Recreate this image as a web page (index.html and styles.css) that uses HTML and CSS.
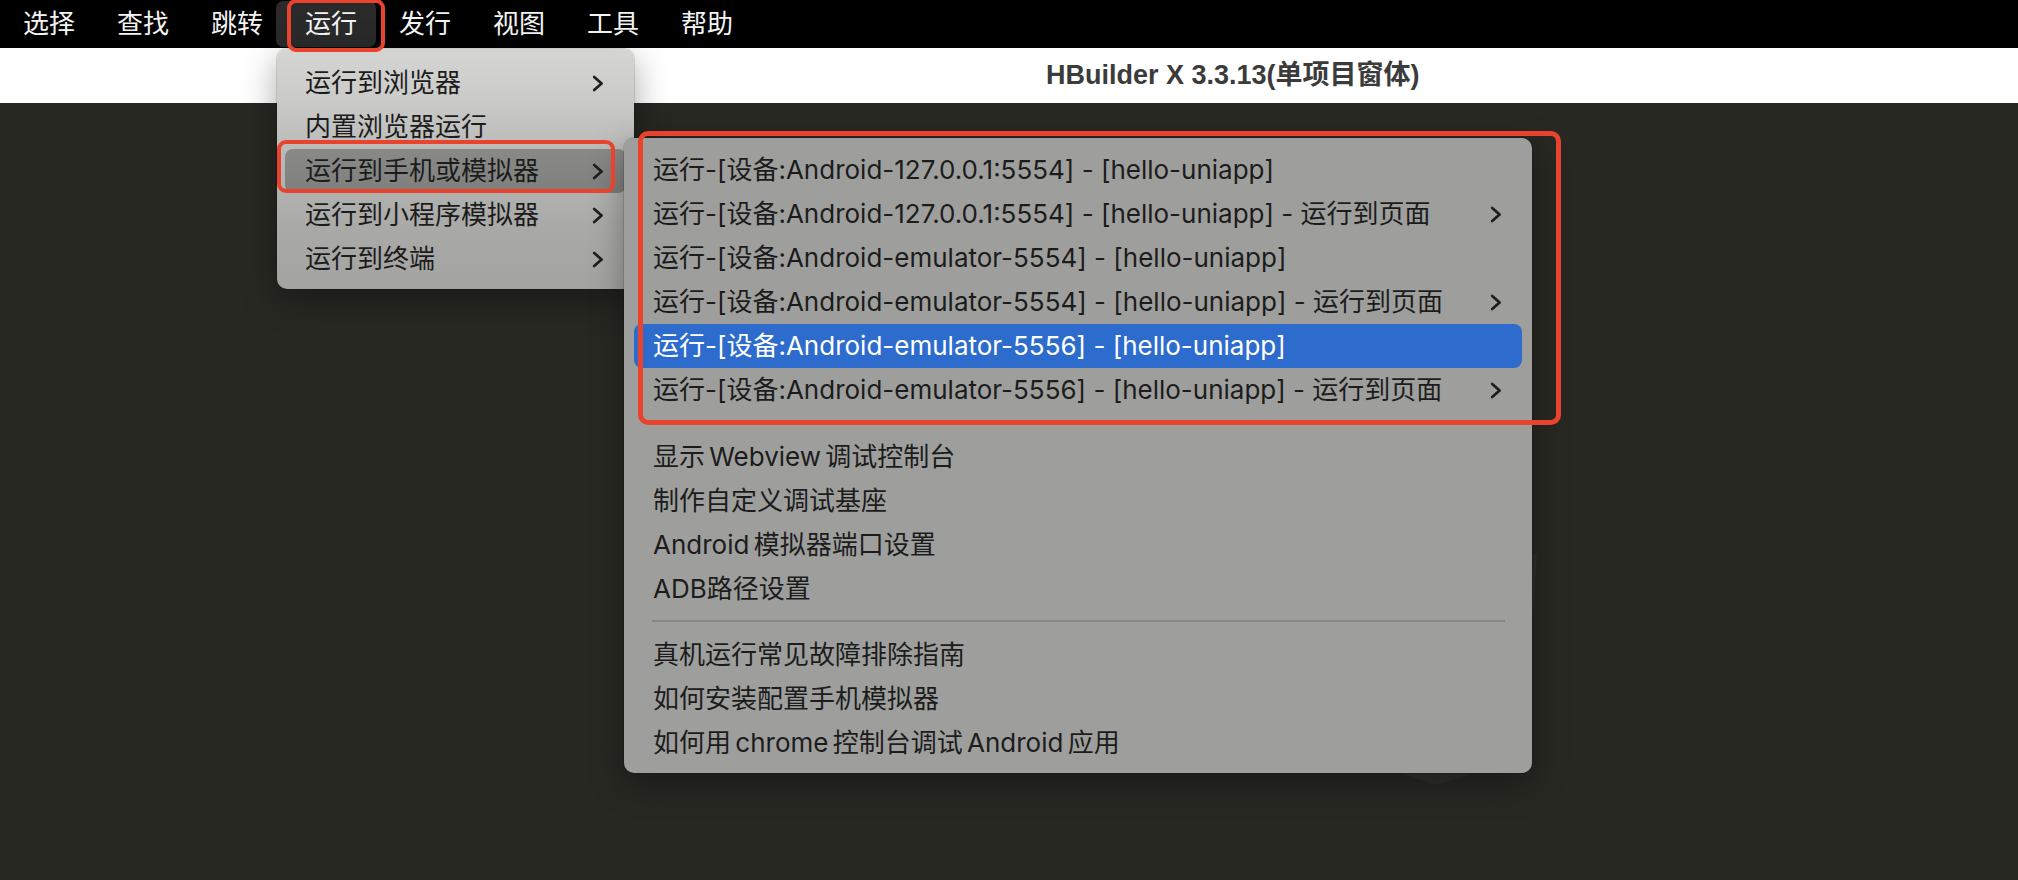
FILE: index.html
```html
<!DOCTYPE html>
<html lang="zh-CN">
<head>
<meta charset="utf-8">
<title>HBuilder X 运行菜单</title>
<link rel="stylesheet" href="styles.css">
</head>
<body>
<div class="screen">
  <div class="menubar">
    <span class="mb-item">选择</span>
    <span class="mb-item">查找</span>
    <span class="mb-item">跳转</span>
    <span class="mb-item active">运行</span>
    <span class="mb-item">发行</span>
    <span class="mb-item">视图</span>
    <span class="mb-item">工具</span>
    <span class="mb-item">帮助</span>
  </div>
  <div class="titlebar"><span class="title">HBuilder X 3.3.13(单项目窗体)</span></div>
  <div class="workspace"></div>

  <svg class="watermark" width="2018" height="880" viewBox="0 0 2018 880">
    <polygon points="1537,555 1524,757 1437,785 1350,757 1337,555 1437,520" fill="#2e2f2a"/>
  </svg>

  <div class="menu menu-run">
    <div class="row"><span class="label">运行到浏览器</span><svg class="chev" width="12" height="17" viewBox="0 0 12 17"><path d="M2.2 2 L9.6 8.5 L2.2 15"/></svg></div>
    <div class="row"><span class="label">内置浏览器运行</span></div>
    <div class="row hover"><span class="label">运行到手机或模拟器</span><svg class="chev" width="12" height="17" viewBox="0 0 12 17"><path d="M2.2 2 L9.6 8.5 L2.2 15"/></svg></div>
    <div class="row"><span class="label">运行到小程序模拟器</span><svg class="chev" width="12" height="17" viewBox="0 0 12 17"><path d="M2.2 2 L9.6 8.5 L2.2 15"/></svg></div>
    <div class="row"><span class="label">运行到终端</span><svg class="chev" width="12" height="17" viewBox="0 0 12 17"><path d="M2.2 2 L9.6 8.5 L2.2 15"/></svg></div>
  </div>

  <div class="menu menu-device">
    <div class="row"><span class="label">运行-[设备:Android-127.0.0.1:5554] - [hello-uniapp]</span></div>
    <div class="row"><span class="label">运行-[设备:Android-127.0.0.1:5554] - [hello-uniapp] - 运行到页面</span><svg class="chev" width="12" height="17" viewBox="0 0 12 17"><path d="M2.2 2 L9.6 8.5 L2.2 15"/></svg></div>
    <div class="row"><span class="label">运行-[设备:Android-emulator-5554] - [hello-uniapp]</span></div>
    <div class="row"><span class="label">运行-[设备:Android-emulator-5554] - [hello-uniapp] - 运行到页面</span><svg class="chev" width="12" height="17" viewBox="0 0 12 17"><path d="M2.2 2 L9.6 8.5 L2.2 15"/></svg></div>
    <div class="row selected"><span class="label">运行-[设备:Android-emulator-5556] - [hello-uniapp]</span></div>
    <div class="row"><span class="label">运行-[设备:Android-emulator-5556] - [hello-uniapp] - 运行到页面</span><svg class="chev" width="12" height="17" viewBox="0 0 12 17"><path d="M2.2 2 L9.6 8.5 L2.2 15"/></svg></div>
    <div class="gap"></div>
    <div class="row mixed"><span class="label">显示 Webview 调试控制台</span></div>
    <div class="row"><span class="label">制作自定义调试基座</span></div>
    <div class="row mixed"><span class="label">Android 模拟器端口设置</span></div>
    <div class="row"><span class="label">ADB路径设置</span></div>
    <div class="sep"></div>
    <div class="row"><span class="label">真机运行常见故障排除指南</span></div>
    <div class="row"><span class="label">如何安装配置手机模拟器</span></div>
    <div class="row mixed"><span class="label">如何用 chrome 控制台调试 Android 应用</span></div>
  </div>

  <div class="mark mark-menubar"></div>
  <div class="mark mark-row"></div>
  <div class="mark mark-devices"></div>
</div>
</body>
</html>
```

FILE: styles.css
```css
* { box-sizing: border-box; }

html, body {
  margin: 0;
  padding: 0;
  background: #272822;
}

.screen {
  position: relative;
  width: 2018px;
  height: 880px;
  overflow: hidden;
  background: #272822;
  font-family: Inter, "Noto Sans CJK SC", sans-serif;
}

/* ---------- menubar ---------- */
.menubar {
  display: flex;
  height: 48px;
  padding-left: 2px;
  background: #000;
}

.mb-item {
  position: relative;
  padding: 0 21px;
  font-size: 26px;
  line-height: 47px;
  color: #f4f4f4;
  z-index: 1;
}

.mb-item.active::before {
  content: "";
  position: absolute;
  left: -8px;
  right: 2px;
  top: 1px;
  bottom: 1px;
  border-radius: 7px;
  background: #2a2a2a;
  z-index: -1;
}

/* ---------- title bar ---------- */
.titlebar {
  height: 55px;
  background: #fff;
  padding-left: 1046px;
  display: flex;
  align-items: center;
}

.title {
  font-family: "Liberation Sans", "Noto Sans CJK SC", sans-serif;
  font-weight: 700;
  font-size: 27px;
  color: #3b3b3b;
  line-height: 1;
}

.workspace {
  height: 777px;
  background: #272822;
}

.watermark {
  position: absolute;
  left: 0;
  top: 0;
  z-index: 0;
}

/* ---------- menus ---------- */
.menu {
  position: absolute;
  border-radius: 10px;
  box-shadow: 0 10px 34px rgba(0, 0, 0, 0.35), 0 0 0 1px rgba(0, 0, 0, 0.12);
  color: #1c1c1c;
  font-size: 26px;
}

.row {
  display: flex;
  align-items: center;
  justify-content: space-between;
  height: 44px;
  border-radius: 8px;
  white-space: nowrap;
}

.label {
  line-height: 44px;
}

.row.mixed .label {
  word-spacing: -3px;
}

.chev path {
  fill: none;
  stroke: #1e1e1e;
  stroke-width: 2.7;
  stroke-linecap: round;
  stroke-linejoin: round;
}

.menu-run {
  left: 277px;
  top: 49px;
  width: 357px;
  padding: 12px 0 8px;
  background: linear-gradient(180deg, #d5d5d3 0%, #cbcbc9 20%, #b8b8b6 45%, #a9a9a7 75%, #a3a3a1 100%);
  z-index: 2;
}

.menu-run .row {
  margin: 0 8px;
  padding: 0 22px 0 20px;
}

.menu-run .row.hover {
  background: linear-gradient(180deg, #898a88, #7f807e);
}

.menu-device {
  left: 624px;
  top: 138px;
  width: 908px;
  padding: 10px 0 8px;
  background: #9e9f9d;
  z-index: 3;
}

.menu-device .row {
  margin: 0 10px;
  padding: 0 20px 0 19px;
}

.menu-device .row.selected {
  background: #2d6ccd;
  color: #fff;
}

.menu-device .gap {
  height: 23px;
}

.menu-device .sep {
  height: 22px;
  margin: 0 27px 0 28px;
  padding-top: 9px;
}

.menu-device .sep::after {
  content: "";
  display: block;
  height: 2px;
  background: #878886;
}

/* ---------- annotation boxes ---------- */
.mark {
  position: absolute;
  border: 4px solid #e9432d;
  border-radius: 9px;
  z-index: 5;
  pointer-events: none;
}

.mark-menubar {
  left: 287px;
  top: -1px;
  width: 98px;
  height: 53px;
}

.mark-row {
  left: 277px;
  top: 140px;
  width: 338px;
  height: 53px;
}

.mark-devices {
  left: 638px;
  top: 131px;
  width: 923px;
  height: 294px;
  border-width: 5px;
  border-radius: 10px;
}
```
